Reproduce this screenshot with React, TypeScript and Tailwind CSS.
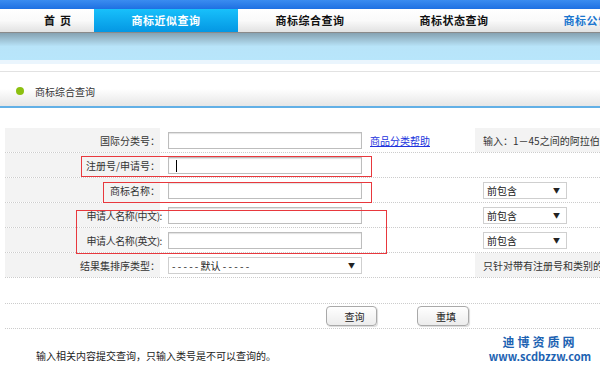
const tabs = [
  { label: '商标综合查询' },
  { label: '商标状态查询' },
  { label: '商标公告查询', hover: true },
];

function TextInput({ caret }: { caret?: boolean }) {
  return (
    <div className="relative h-[17px] w-[194px] border border-[#bdbdbd] bg-white shadow-[inset_0_1px_1px_rgba(0,0,0,0.12)]">
      {caret && <div className="absolute left-[7px] top-[2px] h-[12px] w-px bg-black" />}
    </div>
  );
}

function Select({ text, width }: { text: string; width: string }) {
  return (
    <div className={`flex h-[17px] items-center justify-between border border-[#cfcfcf] bg-white pl-[3px] pr-[6px] text-[10px] text-[#222] ${width}`}>
      <span className="whitespace-pre">{text}</span>
      <span className="text-[7px] leading-none">▼</span>
    </div>
  );
}

function Row({
  label,
  tight,
  children,
  right,
  rightGray,
}: {
  label: string;
  tight?: boolean;
  children?: React.ReactNode;
  right?: React.ReactNode;
  rightGray?: boolean;
}) {
  return (
    <div className="flex h-[25px] border-b border-dotted border-[#cccccc]">
      <div className="flex w-[155px] shrink-0 items-center justify-end whitespace-nowrap bg-[#f3f3f3] text-[10px] text-[#333]">
        <span className={tight ? '-mr-[2px] tracking-[-0.4px]' : ''}>{label}</span>
      </div>
      <div className="flex w-[315px] shrink-0 items-center gap-[8px] pl-[8px]">{children}</div>
      <div
        className={`flex flex-1 items-center overflow-hidden whitespace-nowrap pl-[8px] text-[10px] text-[#333] ${
          rightGray ? 'bg-[#f3f3f3]' : ''
        }`}
      >
        {right}
      </div>
    </div>
  );
}

export default function App() {
  return (
    <div
      className="relative h-[372px] w-[600px] overflow-hidden bg-white"
      style={{ fontFamily: '"Noto Sans CJK SC", "Noto Sans", sans-serif' }}
    >
      <div className="h-[9px] bg-gradient-to-b from-[#3a8cf0] to-[#1e70e2]" />

      <nav className="flex h-[24px] border-b border-[#8a8a8a] bg-gradient-to-b from-white via-[#fafafa] to-[#e2e2e2] text-[11px] font-bold">
        <div className="flex w-[94px] shrink-0 items-center justify-end pr-[18px] tracking-[5px] text-[#111]">
          首页
        </div>
        <div className="flex w-[144px] shrink-0 items-center justify-center bg-gradient-to-b from-[#18c0fb] to-[#0597e3] tracking-[0.5px] text-white">
          商标近似查询
        </div>
        {tabs.map((t) => (
          <div
            key={t.label}
            className={`flex w-[144px] shrink-0 items-center justify-center whitespace-nowrap tracking-[0.5px] ${
              t.hover ? 'text-[#1a76cf]' : 'text-[#111]'
            }`}
          >
            {t.label}
          </div>
        ))}
      </nav>

      <div className="h-[27px] bg-gradient-to-b from-[#86a2b2] via-[#b8e4f9] to-[#b8e6fb]" />
      <div className="h-[4px] bg-[#eaf5fd]" />
      <div className="h-[8px] border-b border-[#e2e2e2] bg-white" />

      <div className="flex h-[36px] items-center border-b-2 border-[#62b0e6] bg-gradient-to-b from-white via-white to-[#e6e6e6] pl-[16px] pt-[4px]">
        <span className="h-[8px] w-[8px] rounded-full bg-[#8cc010]" />
        <span className="ml-[11px] text-[10px] text-[#333]">商标综合查询</span>
      </div>

      <div className="ml-[5px] mt-[20px]">
        <Row label="国际分类号：" rightGray right={<span>输入：1－45之间的阿拉伯数字</span>}>
          <TextInput />
          <a className="text-[10px] text-[#2233dd] underline">商品分类帮助</a>
        </Row>
        <Row label="注册号/申请号：">
          <TextInput caret />
        </Row>
        <Row label="商标名称：" right={<Select text="前包含" width="w-[84px]" />}>
          <TextInput />
        </Row>
        <Row label="申请人名称(中文):" tight right={<Select text="前包含" width="w-[84px]" />}>
          <TextInput />
        </Row>
        <Row label="申请人名称(英文):" tight right={<Select text="前包含" width="w-[84px]" />}>
          <TextInput />
        </Row>
        <Row label="结果集排序类型：" rightGray right={<span>只针对带有注册号和类别的查询</span>}>
          <Select text="- - - - - 默认 - - - - -" width="w-[194px]" />
        </Row>
        <div className="h-[26px] border-b border-dotted border-[#cccccc]" />
        <div className="flex h-[25px] items-center border-b border-dotted border-[#cccccc]">
          <div className="w-[321px] shrink-0" />
          <button className="h-[20px] w-[51px] rounded-[4px] border border-[#a9a9a9] bg-gradient-to-b from-white to-[#ececec] pl-[6px] text-[10px] text-[#222] shadow-[1px_1px_1px_rgba(0,0,0,0.15)]">
            查询
          </button>
          <div className="w-[40px] shrink-0" />
          <button className="h-[20px] w-[52px] rounded-[4px] border border-[#a9a9a9] bg-gradient-to-b from-white to-[#ececec] pl-[6px] text-[10px] text-[#222] shadow-[1px_1px_1px_rgba(0,0,0,0.15)]">
            重填
          </button>
        </div>
      </div>

      <div className="pl-[36px] pt-[19px] text-[10px] text-[#222]">输入相关内容提交查询，只输入类号是不可以查询的。</div>

      <div className="pointer-events-none absolute left-[488px] top-[334px] flex w-[104px] flex-col items-center font-bold text-[#1c62b2]">
        <span className="text-[12px] leading-[15px] tracking-[3px]">迪博资质网</span>
        <span className="text-[11px] leading-[15px]">www.scdbzzw.com</span>
      </div>

      <div className="pointer-events-none absolute left-[81px] top-[156px] h-[21px] w-[291px] border border-[#e8383d]" />
      <div className="pointer-events-none absolute left-[103px] top-[182px] h-[21px] w-[269px] border border-[#e8383d]" />
      <div className="pointer-events-none absolute left-[76px] top-[210px] h-[44px] w-[311px] border border-[#e8383d]" />
    </div>
  );
}
